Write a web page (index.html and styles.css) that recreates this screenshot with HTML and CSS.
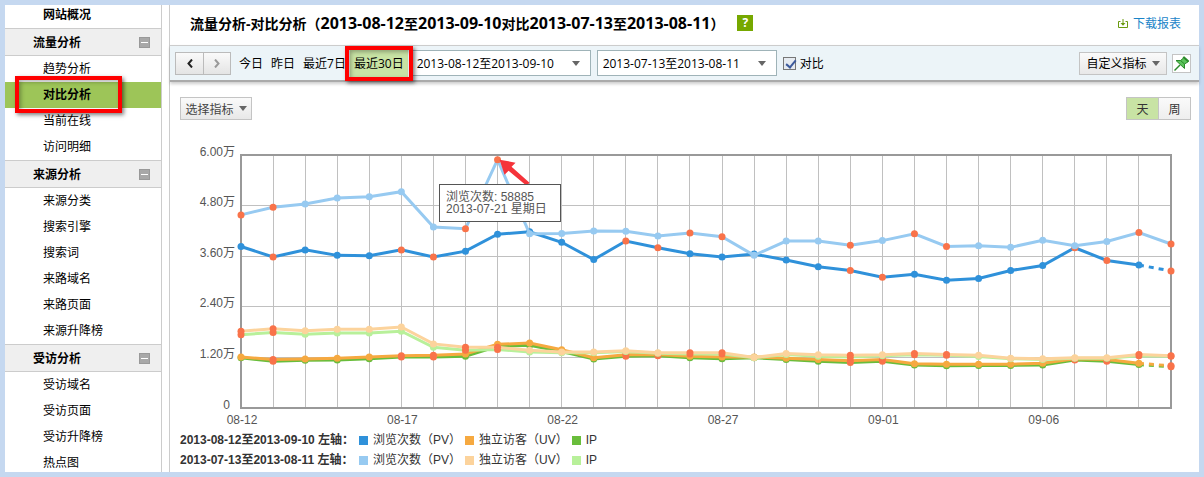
FILE: index.html
```html
<!DOCTYPE html>
<html lang="zh-CN">
<head>
    <meta charset="UTF-8">
    <meta name="viewport" content="width=device-width, initial-scale=1.0">
    <title>流量分析-对比分析</title>
    <link rel="stylesheet" href="styles.css">
</head>
<body>
    <nav class="sidebar">
        <a class="overview" href="#">网站概况</a>

        <div class="menu-title">流量分析<button class="collapse" type="button" aria-label="收起"></button></div>
        <ul class="menu">
            <li><a href="#">趋势分析</a></li>
            <li class="active"><a href="#">对比分析</a><span class="callout callout-menu"></span></li>
            <li><a href="#">当前在线</a></li>
            <li><a href="#">访问明细</a></li>
        </ul>

        <div class="menu-title">来源分析<button class="collapse" type="button" aria-label="收起"></button></div>
        <ul class="menu">
            <li><a href="#">来源分类</a></li>
            <li><a href="#">搜索引擎</a></li>
            <li><a href="#">搜索词</a></li>
            <li><a href="#">来路域名</a></li>
            <li><a href="#">来路页面</a></li>
            <li><a href="#">来源升降榜</a></li>
        </ul>

        <div class="menu-title">受访分析<button class="collapse" type="button" aria-label="收起"></button></div>
        <ul class="menu">
            <li><a href="#">受访域名</a></li>
            <li><a href="#">受访页面</a></li>
            <li><a href="#">受访升降榜</a></li>
            <li><a href="#">热点图</a></li>
        </ul>
    </nav>

    <main class="main">
        <header class="page-header">
            <h1>流量分析-对比分析（<span>2013-08-12</span>至<span>2013-09-10</span>对比<span>2013-07-13</span>至<span>2013-08-11</span>）</h1>
            <button class="help" type="button">?</button>
            <a class="download" href="#">
                <svg width="10" height="9" viewBox="0 0 10 9" fill="none" stroke="#6a9a10">
                    <path d="M2.5 2.5H.5v6h9v-6h-2M5 0v6"/>
                    <path d="M2.5 4h5L5 6.8z" fill="#6a9a10" stroke="none"/>
                </svg>下载报表
            </a>
        </header>

        <div class="toolbar">
            <div class="pager">
                <button type="button" aria-label="前一段">
                    <svg width="6" height="9" viewBox="0 0 6 9" fill="none" stroke="#222" stroke-width="2"><path d="M5 .5L1.5 4.5 5 8.5"/></svg>
                </button>
                <button type="button" aria-label="后一段">
                    <svg width="6" height="9" viewBox="0 0 6 9" fill="none" stroke="#999" stroke-width="2"><path d="M1 .5L4.5 4.5 1 8.5"/></svg>
                </button>
            </div>
            <div class="ranges">
                <a href="#">今日</a>
                <a href="#">昨日</a>
                <a href="#">最近7日</a>
                <a class="current" href="#">最近30日<span class="callout callout-range"></span></a>
            </div>
            <div class="select">
                <select aria-label="日期">
                    <option>2013-08-12至2013-09-10</option>
                </select>
            </div>
            <div class="select">
                <select aria-label="对比日期">
                    <option>2013-07-13至2013-08-11</option>
                </select>
            </div>
            <input class="check" type="checkbox" id="compare" checked>
            <label for="compare">对比</label>
            <button class="btn btn-custom" type="button">自定义指标<i class="caret"></i></button>
            <button class="pin" type="button" aria-label="固定">
                <svg width="17" height="17" viewBox="0 0 17 17">
                    <path d="M7 10L1.5 15.5" stroke="#2b8a2b" stroke-width="1.5"/>
                    <path d="M10.5 2L15.5 6.500 14 7.500 11.500 9 11.500 13.500 3 5.500 7.500 5.500 10 3.500z" fill="#5cc45c" stroke="#2b8a2b"/>
                    <path d="M7.500 5.500L11.500 9" stroke="#2b8a2b"/>
                    <path d="M10.500 2L15.500 6.500" stroke="#2b8a2b" stroke-width="2"/>
                </svg>
            </button>
        </div>

        <div class="content">
            <div class="controls">
                <button class="btn btn-metric" type="button">选择指标<i class="caret"></i></button>
                <div class="unit">
                    <button class="on" type="button">天</button>
                    <button type="button">周</button>
                </div>
            </div>

            <div class="chart" id="chart">
                <svg id="plot" height="290"></svg>
                <div class="tooltip" id="tooltip">浏览次数: 58885<br>2013-07-21 星期日</div>
            </div>

            <ul class="legend">
                <li class="period">2013-08-12至2013-09-10 左轴：</li>
                <li class="pv">浏览次数（PV）</li>
                <li class="uv">独立访客（UV）</li>
                <li class="ip">IP</li>
            </ul>
            <ul class="legend">
                <li class="period">2013-07-13至2013-08-11 左轴：</li>
                <li class="pv-old">浏览次数（PV）</li>
                <li class="uv-old">独立访客（UV）</li>
                <li class="ip-old">IP</li>
            </ul>
        </div>
    </main>

    <script src="chart.js"></script>
</body>
</html>
```

FILE: styles.css
```css
* {
    box-sizing: border-box;
}
html {
    background-color: #c5d8f0;
}
body {
    display: flex;
    gap: 7px;
    height: 100vh;
    margin: 0;
    padding: 5px;
    overflow: hidden;
    background: linear-gradient(#fff, #fff) no-repeat content-box;
    font-family: "Open Sans", "Noto Sans CJK SC", sans-serif;
    font-size: 12px;
    color: #000;
}
a {
    color: inherit;
    text-decoration: none;
}
ul {
    margin: 0;
    padding: 0;
    list-style: none;
}
button, select {
    margin: 0;
    padding: 0;
    font: inherit;
    color: inherit;
    cursor: pointer;
}

/* sidebar */
.sidebar {
    flex: 0 0 157px;
    overflow: hidden;
    border-right: 1px solid #ccc;
}
.overview {
    display: block;
    padding: 0 0 3px 38px;
    line-height: 20px;
    font-weight: bold;
}
.menu-title {
    display: flex;
    align-items: center;
    justify-content: space-between;
    height: 28px;
    padding: 0 11px 0 28px;
    border-top: 1px solid #ccc;
    border-bottom: 1px solid #ccc;
    background-color: #efefef;
    font-weight: bold;
}
.collapse {
    width: 11px;
    height: 11px;
    border: 1px solid #999;
    background: linear-gradient(#fff, #fff) center / 7px 1px no-repeat #a8a8a8;
}
.menu li {
    position: relative;
    height: 26px;
    padding-left: 38px;
    line-height: 25px;
}
.menu .active {
    background-color: #9dc558;
    font-weight: bold;
}

/* red marks */
.callout {
    position: absolute;
    border: 4px solid #f00;
    box-shadow: 2px 2px 4px rgba(0, 0, 0, 0.5), inset 2px 2px 4px rgba(0, 0, 0, 0.3);
    pointer-events: none;
    z-index: 2;
}
.callout-menu {
    left: 10px;
    top: -6px;
    width: 107px;
    height: 37px;
}
.callout-range {
    inset: -4px -5px;
}

/* header */
.main {
    flex: 1;
    min-width: 0;
    border-left: 1px solid #ccc;
}
.page-header {
    display: flex;
    align-items: center;
    height: 40px;
    padding: 0 18px 4px 20px;
}
h1 {
    margin: 0;
    font-size: 14px;
    line-height: 20px;
    white-space: nowrap;
}
h1 span {
    font-size: 16px;
}
.help {
    width: 16px;
    height: 16px;
    margin-left: 13px;
    border: 0;
    background-color: #76a800;
    color: #fff;
    font-weight: bold;
    line-height: 16px;
}
.download {
    display: flex;
    align-items: center;
    gap: 5px;
    margin-left: auto;
    color: #1a84c8;
}

/* toolbar */
.toolbar {
    display: flex;
    align-items: center;
    height: 37px;
    padding: 0 8px 0 5px;
    border-top: 1px solid #ccc;
    border-bottom: 2px solid #aaa;
    background-color: #ecf4f8;
    box-shadow: 0 2px 3px rgba(0, 0, 0, 0.2);
    white-space: nowrap;
}
.pager {
    display: flex;
    height: 23px;
    border: 1px solid #bbb;
    background: linear-gradient(#fafafa, #e4e4e4);
}
.pager button {
    width: 27px;
    border: 0;
    background: none;
}
.pager button + button {
    border-left: 1px solid #bbb;
}
.ranges {
    display: flex;
    margin: 0 3px 0 4px;
    line-height: 27px;
}
.ranges a {
    padding: 0 4px;
}
.ranges .current {
    position: relative;
    background-color: #c8e3a4;
}
.select {
    position: relative;
    width: 180px;
    margin-right: 6px;
}
.select::after, .caret {
    border: 4px solid transparent;
    border-top: 5px solid #666;
    border-bottom: 0;
}
.select::after {
    content: "";
    position: absolute;
    right: 11px;
    top: 11px;
    pointer-events: none;
}
.select select {
    width: 100%;
    height: 26px;
    padding: 0 20px 0 5px;
    border: 1px solid #9fb3b8;
    border-radius: 0;
    background-color: #fff;
    appearance: none;
}
.check {
    width: 13px;
    height: 13px;
    margin: 0 4px 0 0;
    border: 1px solid #777;
    background-color: #e6ebf1;
    appearance: none;
}
.check:checked::before {
    content: "";
    display: block;
    width: 4px;
    height: 8px;
    margin: 0 0 0 4px;
    border: solid #3c5a9c;
    border-width: 0 2px 2px 0;
    transform: rotate(40deg);
}
.btn {
    display: flex;
    align-items: center;
    justify-content: center;
    gap: 5px;
    height: 23px;
    border: 1px solid #c4c4c4;
    background: linear-gradient(#fafafa, #e8e8e8);
}
.btn-custom {
    width: 88px;
    margin-left: auto;
}
.btn-metric {
    width: 72px;
    color: #444;
}
.pin {
    display: flex;
    width: 19px;
    height: 19px;
    margin-left: 5px;
    border: 1px solid #c4c4c4;
    background-color: #fff;
}

/* chart */
.content {
    padding: 15px 8px 0 10px;
}
.controls {
    display: flex;
    justify-content: space-between;
    margin-bottom: 20px;
}
.unit {
    display: flex;
    width: 65px;
    height: 23px;
    border: 1px solid #c4c4c4;
    background: linear-gradient(#fafafa, #eee);
}
.unit button {
    flex: 1;
    border: 0;
    background: none;
    color: #333;
}
.unit .on {
    border-right: 1px solid #c4c4c4;
    background-color: #c8e3a4;
}
.chart {
    position: relative;
    font-family: "Liberation Sans", "Noto Sans CJK SC", sans-serif;
}
.chart svg {
    display: block;
    width: 100%;
}
.chart text {
    fill: #555;
    font-size: 12px;
}
.tooltip {
    position: absolute;
    width: 122px;
    padding: 6px;
    border: 1px solid #555;
    background-color: #fff;
    color: #555;
    line-height: 12px;
    white-space: nowrap;
}
.legend {
    display: flex;
    gap: 4px;
    font-family: "Liberation Sans", "Noto Sans CJK SC", sans-serif;
    line-height: 20px;
    color: #333;
}
.legend li {
    display: flex;
    align-items: center;
    gap: 5px;
}
.legend .period {
    min-width: 175px;
    font-family: "Liberation Sans", "Noto Sans CJK TC", sans-serif;
    font-weight: bold;
}
.legend li::before {
    content: "";
    width: 9px;
    height: 9px;
}
.legend .period::before { display: none; }
.legend .pv::before { background-color: #2f91da; }
.legend .uv::before { background-color: #f6a940; }
.legend .ip::before { background-color: #69bd3b; }
.legend .pv-old::before { background-color: #97caf1; }
.legend .uv-old::before { background-color: #fcd39c; }
.legend .ip-old::before { background-color: #b8f09a; }
```

FILE: chart.js
```js
// values are in hundreds of visits, 600 = 6.00万
var weekends = [1, 5, 6, 12, 13, 19, 20, 26, 27, 29];
var weekendsOld = [0, 1, 7, 8, 14, 15, 19, 21, 22, 28, 29];

var series = [
    { color: '#2f91da', marks: weekends, dashed: true, data: [383, 358, 375, 362, 361, 375, 358, 372, 412, 418, 393, 352, 396, 380, 366, 358, 365, 351, 335, 326, 310, 317, 303, 307, 326, 338, 380, 350, 339, 325] },
    { color: '#97caf1', marks: weekendsOld, data: [458, 476, 484, 498, 501, 513, 429, 425, 589, 413, 414, 420, 419, 408, 415, 406, 362, 396, 396, 386, 397, 413, 383, 385, 381, 398, 385, 395, 416, 389] },
    { color: '#69bd3b', marks: weekends, dashed: true, data: [119, 111, 113, 114, 117, 121, 121, 123, 146, 149, 134, 116, 123, 124, 119, 117, 119, 115, 111, 108, 111, 102, 100, 101, 101, 102, 114, 111, 103, 98] },
    { color: '#f6a940', marks: weekends, dashed: true, data: [121, 115, 116, 118, 121, 124, 125, 128, 151, 154, 138, 119, 126, 127, 123, 121, 121, 118, 115, 112, 115, 105, 104, 104, 104, 106, 117, 115, 106, 100] },
    { color: '#b8f09a', marks: weekendsOld, data: [174, 179, 175, 178, 178, 182, 144, 137, 139, 133, 131, 131, 134, 130, 128, 128, 119, 127, 123, 121, 124, 126, 125, 122, 117, 115, 118, 118, 124, 123] },
    { color: '#fcd39c', marks: weekendsOld, data: [182, 188, 183, 187, 187, 192, 152, 144, 144, 137, 133, 133, 136, 131, 131, 131, 120, 129, 126, 125, 126, 129, 127, 125, 118, 117, 119, 119, 127, 124] }
];
var xLabels = ['08-12', '08-17', '08-22', '08-27', '09-01', '09-06'];
var yLabels = ['0', '1.20万', '2.40万', '3.60万', '4.80万', '6.00万'];

function draw() {
    var plot = document.getElementById('plot');
    var left = 61;
    var right = document.getElementById('chart').clientWidth - 20;
    var top = 15;
    var bottom = 268;
    var html = '';

    function x(i) { return left + (right - left) * i / 29; }
    function y(v) { return bottom - (bottom - top) * v / 600; }
    function line(x1, y1, x2, y2, attrs) {
        return '<line x1="' + x1 + '" y1="' + y1 + '" x2="' + x2 + '" y2="' + y2 + '" ' + attrs + '/>';
    }

    // grid
    for (var i = 1; i < 29; i++) {
        var gx = Math.floor(x(i)) + 0.5;
        html += line(gx, top, gx, bottom, 'stroke="#c0c0c0"');
    }
    for (var j = 0; j < 6; j++) {
        var gy = Math.floor(y(j * 120)) + 0.5;
        if (j > 0 && j < 5) {
            html += line(left, gy, right, gy, 'stroke="#c0c0c0"');
        }
        html += '<text text-anchor="end" x="' + (j ? 55 : 50) + '" y="' + gy + '">' + yLabels[j] + '</text>';
    }
    html += '<rect x="' + left + '" y="' + top + '" width="' + (right - left) + '" height="' + (bottom - top) + '" fill="none" stroke="#999" stroke-width="2"/>';
    xLabels.forEach(function(label, k) {
        html += '<text text-anchor="middle" x="' + (x(k * 5) + 1) + '" y="284">' + label + '</text>';
    });

    // lines and dots
    series.forEach(function(s) {
        var points = s.data.map(function(v, n) { return x(n) + ',' + y(v); });
        var solid = s.dashed ? points.slice(0, 29) : points;
        html += '<polyline points="' + solid.join(' ') + '" fill="none" stroke="' + s.color + '" stroke-width="3"/>';
        if (s.dashed) {
            html += line(x(28), y(s.data[28]), x(29), y(s.data[29]), 'stroke="' + s.color + '" stroke-width="3" stroke-dasharray="5 5"');
        }
        s.data.forEach(function(v, n) {
            var fill = s.marks.indexOf(n) >= 0 ? '#f9734a' : s.color;
            html += '<circle cx="' + x(n) + '" cy="' + y(v) + '" r="3.500" fill="' + fill + '"/>';
        });
    });

    // arrow to the peak
    var px = x(8);
    var py = y(589);
    html += '<g transform="translate(' + px + ' ' + py + ')" fill="#f5333a">' +
        '<path d="M2 0L18 3L14 7L32 23L29 26L11 11L7 15Z"/></g>';

    plot.innerHTML = html;
    var tooltip = document.getElementById('tooltip');
    tooltip.style.left = Math.round(px - 59) + 'px';
    tooltip.style.top = Math.round(py + 24) + 'px';
}

draw();
window.addEventListener('resize', draw);
```
